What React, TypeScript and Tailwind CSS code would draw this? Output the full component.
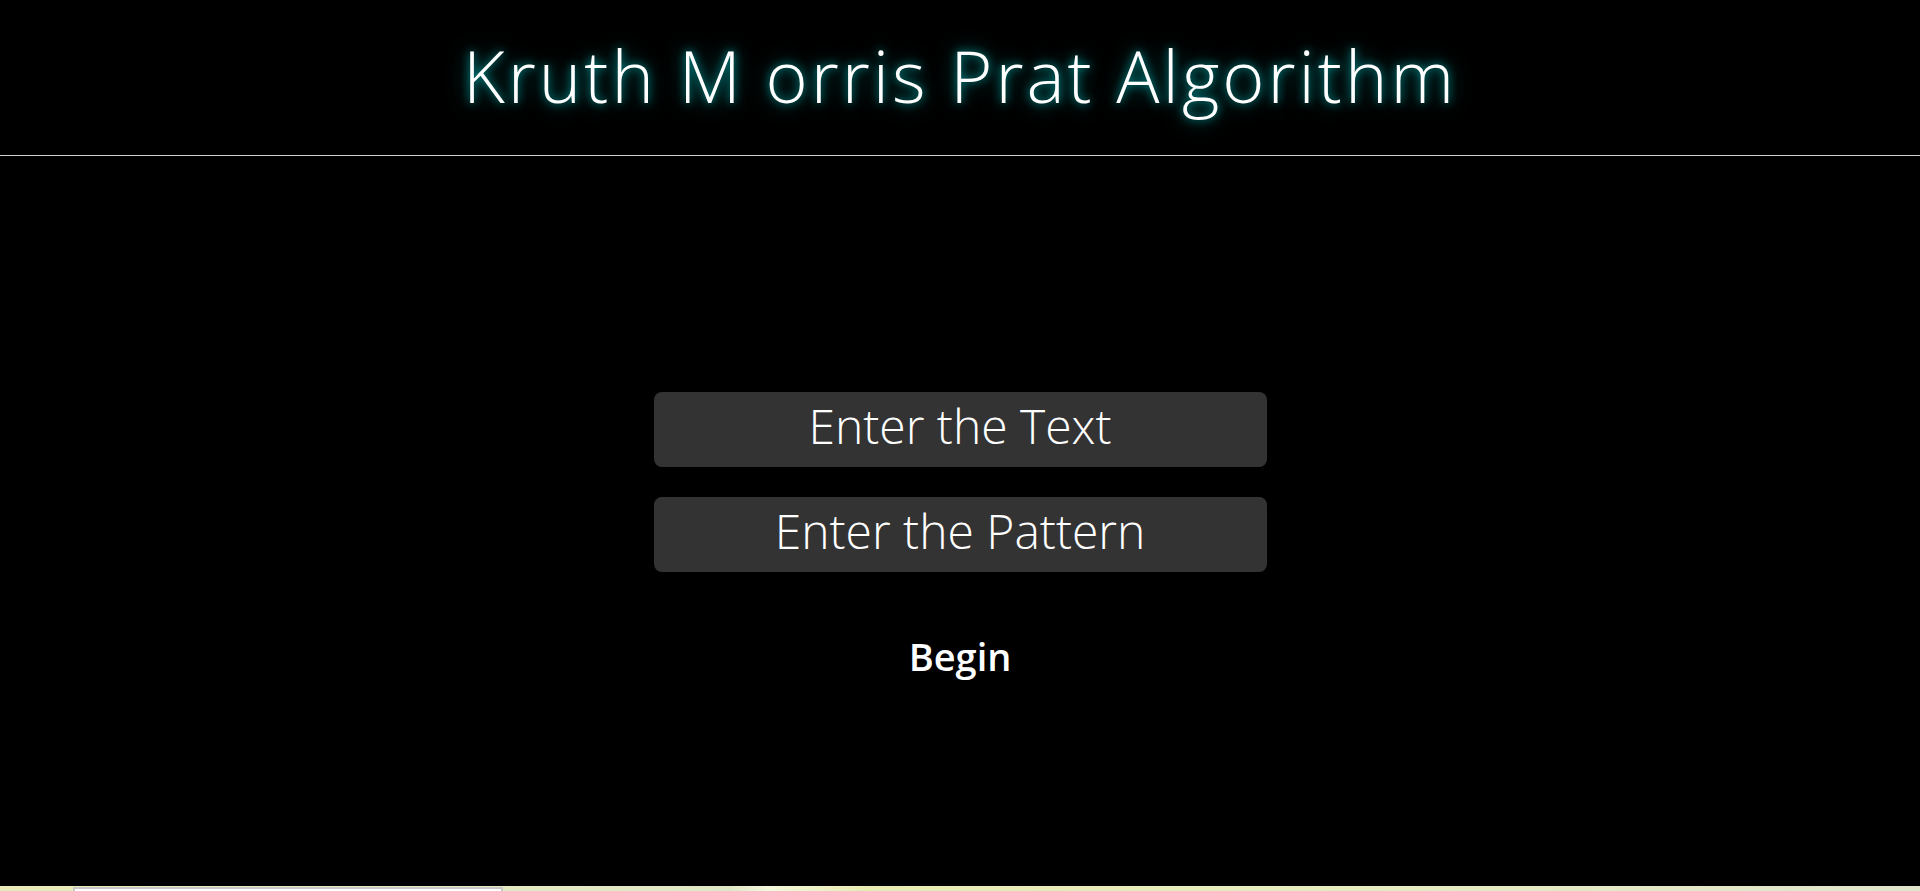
import React from 'react'

function App() {
  return (
    <div className="min-h-screen bg-black font-['Open_Sans',sans-serif] text-white">
      {/* Header */}
      <header className="border-b border-[#cfcfcf] pt-[26px] pb-[31px] text-center">
        <h1 className="text-[72px] font-light leading-[98px] tracking-[3px] [text-shadow:0_0_10px_rgba(0,230,230,0.7),0_0_22px_rgba(0,190,190,0.55)]">
          Kruth M orris Prat Algorithm
        </h1>
      </header>

      <main className="flex h-[730px] flex-col items-center pt-[236px]">
        <input
          type="text"
          placeholder="Enter the Text"
          className="h-[75px] w-[613px] rounded-lg bg-[#333333] pb-[8px] text-center text-[48px] font-light text-white outline-none placeholder:text-white"
        />
        <input
          type="text"
          placeholder="Enter the Pattern"
          className="mt-[30px] h-[75px] w-[613px] rounded-lg bg-[#333333] pb-[8px] text-center text-[48px] font-light text-white outline-none placeholder:text-white"
        />
        <button className="mt-[58px] text-[38px] font-semibold leading-[52px] text-white">
          Begin
        </button>
      </main>

      {/* section below the fold */}
      <section className="flex h-[300px] bg-[linear-gradient(90deg,#e9ebb9_0%,#e2e9c4_30%,#dfe8c6_38%,#f3f7dc_40%,#e8ecb3_45%,#e6ebc0_70%,#e1e5cc_100%)] pl-[73px]">
        <div className="mt-px h-[260px] w-[430px] border-2 border-[#c8c8c8] bg-white"></div>
      </section>
    </div>
  )
}

export default App
